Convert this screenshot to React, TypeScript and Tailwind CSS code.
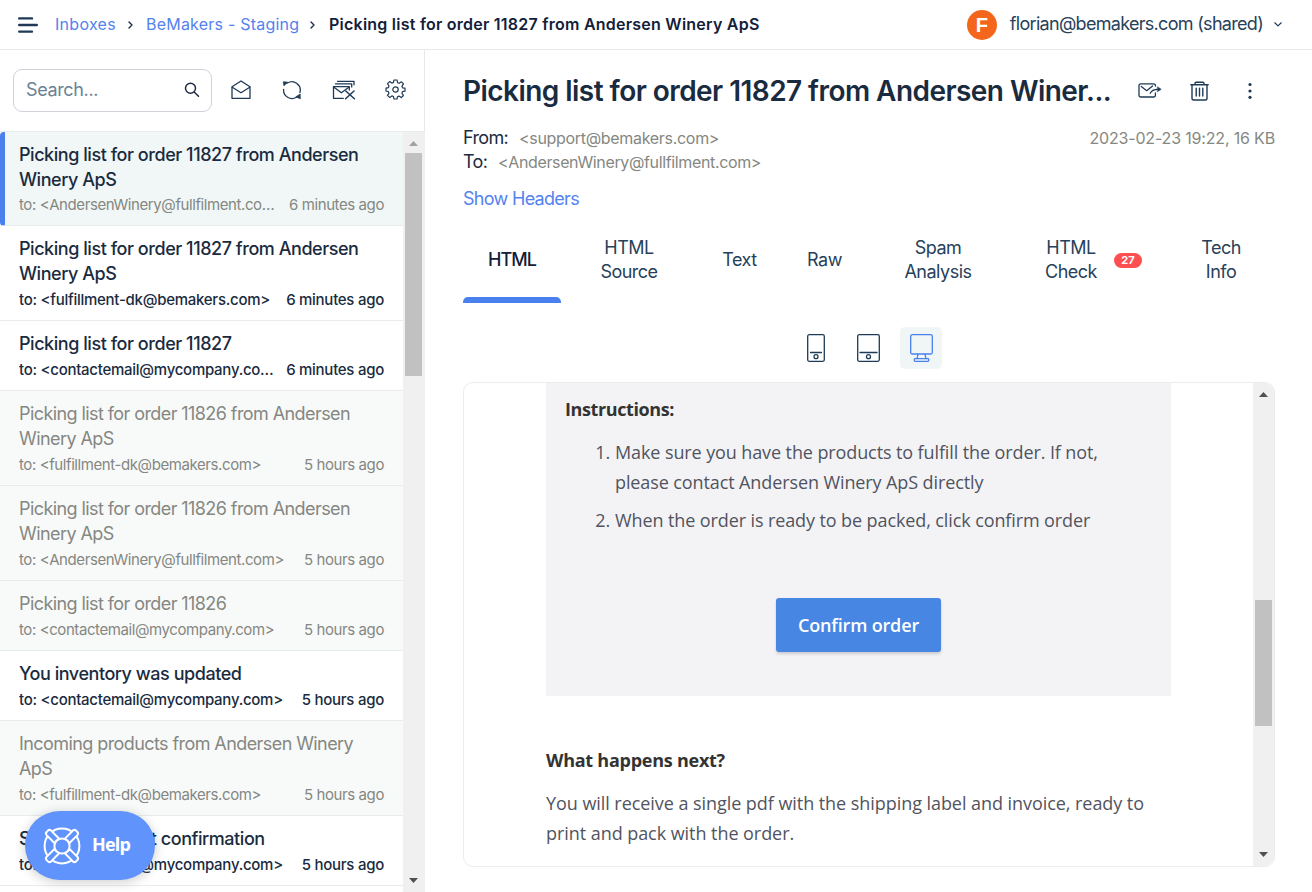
import React from "react";

type Mail = {
  subject: string;
  to: string;
  time: string;
  unread?: boolean;
  active?: boolean;
};

const mails: Mail[] = [
  { subject: "Picking list for order 11827 from Andersen Winery ApS", to: "<AndersenWinery@fullfilment.com>", time: "6 minutes ago", active: true },
  { subject: "Picking list for order 11827 from Andersen Winery ApS", to: "<fulfillment-dk@bemakers.com>", time: "6 minutes ago", unread: true },
  { subject: "Picking list for order 11827", to: "<contactemail@mycompany.com>", time: "6 minutes ago", unread: true },
  { subject: "Picking list for order 11826 from Andersen Winery ApS", to: "<fulfillment-dk@bemakers.com>", time: "5 hours ago" },
  { subject: "Picking list for order 11826 from Andersen Winery ApS", to: "<AndersenWinery@fullfilment.com>", time: "5 hours ago" },
  { subject: "Picking list for order 11826", to: "<contactemail@mycompany.com>", time: "5 hours ago" },
  { subject: "You inventory was updated", to: "<contactemail@mycompany.com>", time: "5 hours ago", unread: true },
  { subject: "Incoming products from Andersen Winery ApS", to: "<fulfillment-dk@bemakers.com>", time: "5 hours ago" },
  { subject: "Supply shipment confirmation", to: "<contactemail@mycompany.com>", time: "5 hours ago", unread: true },
];

const stroke = { fill: "none", stroke: "currentColor", strokeLinecap: "round" as const, strokeLinejoin: "round" as const };

function MenuIcon() {
  return (
    <svg className="ml-[18px] h-4 w-5 text-[#1e3a56]" viewBox="0 0 20 16" {...stroke} strokeWidth="2.4">
      <path d="M1.2 1.4H14M1.2 8H18.800M1.2 14.600H14" />
    </svg>
  );
}

function Chevron() {
  return (
    <svg className="mt-px h-2 w-[5px] text-[#1a2b49]" viewBox="0 0 5 8" {...stroke} strokeWidth="1.4">
      <path d="M1 1l3 3-3 3" />
    </svg>
  );
}

function SearchIcon() {
  return (
    <svg className="h-4 w-4 text-[#1e2b45]" viewBox="0 0 16 16" {...stroke} strokeWidth="1.5">
      <circle cx="6.5" cy="6.3" r="5" />
      <path d="M10.2 10l4.3 4.3" />
    </svg>
  );
}

function OpenMailIcon() {
  return (
    <svg className="h-5 w-5" viewBox="0 0 20 20" {...stroke} strokeWidth="1.3">
      <path d="M1 6.8L10 1l9 5.8V18.3H1z" />
      <path d="M1.3 7.3L10 12.8l8.7-5.5" />
    </svg>
  );
}

function RefreshIcon() {
  return (
    <svg className="h-5 w-5" viewBox="0 0 20 20" {...stroke} strokeWidth="1.3">
      <path d="M5.4 3A8.400 8.400 0 0 1 17.900 12.500" />
      <path d="M1.600 9.500A8.400 8.400 0 0 0 14.400 17.200" />
      <path d="M1.700 1.800L5.800 2.300 2.100 5.500z" fill="currentColor" strokeWidth=".8" />
      <path d="M18 18.600L13.800 16.900 17.900 14.200z" fill="currentColor" strokeWidth=".8" />
    </svg>
  );
}

function ClearInboxIcon() {
  return (
    <svg className="h-5 w-6" viewBox="0 0 24 20" {...stroke} strokeWidth="1.3">
      <path d="M5.500 1.300H22v3.500M3.500 3.900H19.700v3M11.300 18.300H1.500V6.600h15.800v3.500" />
      <path d="M2 7.200l7.300 5.600 7.600-5.600" />
      <path d="M13.800 11l8.600 7.800M22 11l-8.400 7.800" strokeWidth="1.5" />
    </svg>
  );
}

function GearIcon() {
  return (
    <svg className="h-[21px] w-[21px]" viewBox="0 0 21 21" {...stroke} strokeWidth="1.2">
      <circle cx="10.5" cy="10.5" r="2.7" />
      <path d="M9 1h3l.6 2.7 1.5.6 2.3-1.5 2.1 2.1-1.5 2.3.6 1.6L20 9.2v2.9l-2.5.5-.6 1.6 1.5 2.3-2.1 2.1-2.3-1.5-1.5.6L12 20H9l-.6-2.5-1.5-.6-2.3 1.5-2.1-2.1L4 14.2l-.6-1.6L1 12V9.2l2.4-.6.6-1.6-1.5-2.3 2.1-2.1 2.3 1.5 1.5-.6z" />
    </svg>
  );
}

function ForwardIcon() {
  return (
    <svg className="h-[18px] w-6" viewBox="0 0 24 18" {...stroke} strokeWidth="1.3">
      <path d="M17.4 4V3.600A1.800 1.800 0 0 0 15.600 1.800H2.800A1.800 1.800 0 0 0 1 3.600V13.200A1.800 1.800 0 0 0 2.800 15H15.600A1.800 1.800 0 0 0 17.400 13.200V11" />
      <path d="M3.300 4.500l5.400 4.200 5.800-4.700M12.200 11.300c1.300-2.700 3-4 7.500-4" />
      <path d="M19.500 4.800L23.300 7.300l-3.800 2.500z" fill="currentColor" strokeWidth=".4" />
    </svg>
  );
}

function TrashIcon() {
  return (
    <svg className="h-5 w-[19px]" viewBox="0 0 19 20" {...stroke} strokeWidth="1.4">
      <path d="M.8 3.700H18.200M5 3.500V2.400A1.200 1.200 0 0 1 6.200 1.200H12.800A1.200 1.200 0 0 1 14 2.400V3.500M2 3.900V17.200A1.800 1.800 0 0 0 3.800 19H15.200A1.800 1.800 0 0 0 17 17.200V3.900" />
      <path d="M6.200 7.200v7.900M9.500 7.200v7.900M12.800 7.200v7.900" />
    </svg>
  );
}

function DotsIcon() {
  return (
    <svg className="h-[18px] w-1" viewBox="0 0 4 18" fill="currentColor">
      <circle cx="2" cy="2.500" r="1.600" />
      <circle cx="2" cy="9" r="1.600" />
      <circle cx="2" cy="15.300" r="1.600" />
    </svg>
  );
}

function PhoneIcon() {
  return (
    <svg className="h-7 w-[18px]" viewBox="0 0 18 28" {...stroke} strokeWidth="1.3">
      <rect x=".7" y=".7" width="16.600" height="26.600" rx="1.500" />
      <path d="M3.500 18.500h11" />
      <circle cx="9" cy="22.700" r="2" />
    </svg>
  );
}

function TabletIcon() {
  return (
    <svg className="h-7 w-[23px]" viewBox="0 0 23 28" {...stroke} strokeWidth="1.3">
      <rect x=".7" y=".7" width="21.600" height="26.600" rx="1.500" />
      <path d="M3 18.500h17" />
      <circle cx="11.500" cy="22.700" r="2" />
    </svg>
  );
}

function MonitorIcon() {
  return (
    <svg className="h-7 w-[23px]" viewBox="0 0 23 28" {...stroke} strokeWidth="1.3">
      <rect x=".7" y=".7" width="21.600" height="19.300" rx="1.500" />
      <path d="M8 20.200l-1 4.500M15 20.200l1 4.500" />
      <rect x="4.300" y="24.600" width="14.400" height="2.700" rx=".8" />
    </svg>
  );
}

function LifebuoyIcon() {
  return (
    <svg className="h-[38px] w-[38px]" viewBox="0 0 38 38" {...stroke} strokeWidth="2">
      <circle cx="19" cy="19" r="17.400" />
      <circle cx="19" cy="19" r="7.600" />
      {[0, 90, 180, 270].map((angle) => (
        <path
          key={angle}
          transform={`rotate(${angle} 19 19)`}
          fill="#6094fc"
          d="M11.700 16.200L3.600 8.100A2.300 2.300 0 0 1 3.600 5L5 3.600A2.300 2.300 0 0 1 8.100 3.600L16.200 11.700A7.600 7.600 0 0 0 11.700 16.200z"
        />
      ))}
    </svg>
  );
}

function ArrowTri({ down, className }: { down?: boolean; className: string }) {
  return (
    <svg className={className} viewBox="0 0 9 5" fill="currentColor">
      <path d={down ? "M0 0h9L4.500 5z" : "M0 5h9L4.500 0z"} />
    </svg>
  );
}

function MailRow({ mail, first }: { mail: Mail; first: boolean }) {
  const tone = mail.active
    ? "border-l-[5px] border-l-[#4a80ee] bg-[#f0f7f6] pl-[14px] pt-[10px]"
    : mail.unread
      ? "bg-white pl-[19px] pt-[10px]"
      : "bg-[#f8faf9] pl-[19px] pt-[10px]";
  const bold = mail.active || mail.unread;
  return (
    <li className={`flex flex-col border-b border-b-[#e9ecec] pr-[19px] ${tone} ${first ? "h-[94px] rounded-l-[4px]" : "pb-[10px]"}`}>
      <div className={bold ? "text-[18px] font-medium leading-[25px] tracking-[-0.45px] text-[#1a2b40]" : "text-[18px] leading-[25px] tracking-[-0.58px] text-[#858782]"}>
        {mail.subject}
      </div>
      <div
        className={`flex justify-between whitespace-nowrap text-[15px] leading-[21px] ${first ? "mt-[2px]" : "mt-[3px]"} ${
          mail.unread ? "font-medium tracking-[-0.265px] text-[#1a2b40]" : "tracking-[-0.41px] text-[#858782]"
        }`}
      >
        <span className="mr-[12px] min-w-0 truncate">to: {mail.to}</span>
        <span className="shrink-0">{mail.time}</span>
      </div>
    </li>
  );
}

function Header() {
  return (
    <header className="flex h-[50px] shrink-0 items-center border-b border-[#e9e9e9] pr-[30px]">
      <MenuIcon />
      <nav className="-mt-px ml-[17px] flex items-center text-[16px] leading-6">
        <a className="w-[73px] tracking-[0.28px] text-[#5482ee]">Inboxes</a>
        <Chevron />
        <a className="ml-[13px] w-[164px] tracking-[0.22px] text-[#5482ee]">BeMakers - Staging</a>
        <Chevron />
        <span className="ml-[14px] whitespace-nowrap font-semibold tracking-[0.24px] text-[#12203a]">Picking list for order 11827 from Andersen Winery ApS</span>
      </nav>
      <div className="ml-auto flex items-center">
        <div className="flex h-[30px] w-[30px] items-center justify-center rounded-full bg-[#f4661b] font-['Liberation_Sans',sans-serif] text-[20px] font-bold text-white">F</div>
        <span className="-mt-[2px] ml-[13px] text-[18px] leading-6 tracking-[-0.7px] text-[#27415a]">florian@bemakers.com (shared)</span>
        <svg className="ml-[11px] h-[5px] w-2 text-[#1e3a56]" viewBox="0 0 8 5" {...stroke} strokeWidth="1.2">
          <path d="M.8.8L4 3.900 7.200.8" />
        </svg>
      </div>
    </header>
  );
}

function Sidebar() {
  return (
    <aside className="flex w-[425px] shrink-0 flex-col border-r border-[#e9e9e9]">
      <div className="flex h-[81px] shrink-0 items-center pb-px pl-[13px] text-[#1e3a56]">
        <div className="flex h-[43px] w-[199px] items-center justify-between rounded-[9px] border border-[#cfd2d8] pl-[12px] pr-[11px]">
          <span className="-mt-[2px] text-[18px] tracking-[-0.36px] text-[#6a8294]">Search...</span>
          <SearchIcon />
        </div>
        <div className="-mt-px ml-[19px] flex items-center">
          <OpenMailIcon />
          <span className="ml-[31px]"><RefreshIcon /></span>
          <span className="ml-[30px]"><ClearInboxIcon /></span>
          <span className="ml-[29px]"><GearIcon /></span>
        </div>
      </div>
      <div className="flex min-h-0 flex-1 border-t border-[#e9ecec]">
        <ul className="w-[403px] shrink-0 overflow-hidden">
          {mails.map((mail, i) => (
            <MailRow key={i} mail={mail} first={i === 0} />
          ))}
        </ul>
        <div className="-mr-px flex w-[22px] shrink-0 flex-col bg-[#f0f0f0] pl-[2px]">
          <ArrowTri className="mb-[7px] ml-[4px] mt-[9px] h-[5px] w-[9px] shrink-0 text-[#a3a3a3]" />
          <div className="h-[223px] w-[17px] shrink-0 bg-[#c1c1c1]" />
          <ArrowTri down className="mb-[9px] ml-[4px] mt-auto h-[5px] w-[9px] shrink-0 text-[#505050]" />
        </div>
      </div>
    </aside>
  );
}

const tabs = [
  { label: "HTML", width: "w-[98px]", active: true },
  { label: "HTML Source", width: "w-[136px] px-[38px]" },
  { label: "Text", width: "w-[85px]" },
  { label: "Raw", width: "w-[85px]" },
  { label: "Spam Analysis", width: "w-[142px] px-[34px]" },
  { label: "HTML Check", width: "w-[158px]", badge: "27" },
  { label: "Tech Info", width: "w-[108px] px-[32px]" },
];

function Tabs() {
  return (
    <div className="mt-[24px] flex h-[68px] text-[18px] leading-6 tracking-[-0.5px] text-[#27415a]">
      {tabs.map((tab) => (
        <div
          key={tab.label}
          className={`flex shrink-0 flex-col items-center text-center ${tab.width} ${tab.active ? "font-medium tracking-[-0.94px] text-[#12203a]" : ""}`}
        >
          <div className="flex h-12 items-center">
            {tab.badge ? (
              <div className="flex items-center pl-[11px]">
                <span className="w-[52px]">{tab.label}</span>
                <span className="ml-[17px] flex h-[15px] w-[28px] items-center justify-center rounded-full bg-[#fb4f51] text-[11px] font-bold leading-none tracking-normal text-white">{tab.badge}</span>
              </div>
            ) : (
              tab.label
            )}
          </div>
          {tab.active && <div className="mt-[13px] h-[6px] w-full shrink-0 rounded-t-[5px] bg-[#4a80ee]" />}
        </div>
      ))}
    </div>
  );
}

function Preview() {
  return (
    <div className="mt-[13px] flex h-[485px] w-[812px] shrink-0 overflow-hidden rounded-[10px] border border-[#ececec] font-['Open_Sans','Noto_Sans',sans-serif] text-[18px] leading-[30px] text-[#51545e]">
      <div className="min-w-0 flex-1 pl-[82px]">
        <div className="h-[313px] w-[625px] bg-[#f3f3f6] pl-[19px] pt-[11px]">
          <h2 className="font-bold tracking-[-0.4px] text-[#333333]">Instructions:</h2>
          <ol className="mt-[13px] flex flex-col gap-[8px] tracking-[-0.105px]">
            {["Make sure you have the products to fulfill the order. If not, please contact Andersen Winery ApS directly", "When the order is ready to be packed, click confirm order"].map((step, i) => (
              <li key={step} className="flex">
                <span className="w-[45px] shrink-0 text-right">{i + 1}.</span>
                <span className="ml-[5px] w-[500px]">{step}</span>
              </li>
            ))}
          </ol>
          <div className="ml-[211px] mt-[63px] flex h-[54px] w-[165px] items-center justify-center rounded-[3px] bg-[#4886e4] font-semibold tracking-[-0.16px] text-white shadow-[0_2px_3px_rgba(0,0,0,0.16)]">
            Confirm order
          </div>
        </div>
        <h2 className="mt-[49px] font-bold tracking-[-0.25px] text-[#333333]">What happens next?</h2>
        <p className="mt-[13px] w-[625px] tracking-[-0.056px]">
          You will receive a single pdf with the shipping label and invoice, ready to print and pack with the order.
        </p>
      </div>
      <div className="flex w-[21px] shrink-0 flex-col items-center bg-[#f0f0f0]">
        <ArrowTri className="mt-[9px] h-[5px] w-[9px] shrink-0 text-[#505050]" />
        <div className="mt-[203px] h-[126px] w-[17px] shrink-0 bg-[#c1c1c1]" />
        <ArrowTri down className="mb-[9px] mt-auto h-[5px] w-[9px] shrink-0 text-[#505050]" />
      </div>
    </div>
  );
}

function Message() {
  return (
    <main className="flex min-w-0 flex-1 flex-col pl-[38px] pr-[37px]">
      <div className="mt-[23px] flex h-[36px] items-center text-[#1e3a56]">
        <h1 className="w-[660px] whitespace-nowrap text-[28px] font-semibold leading-9 tracking-[-0.55px] text-[#1a2b40]">Picking list for order 11827 from Andersen Winer...</h1>
        <span className="ml-[15px]"><ForwardIcon /></span>
        <span className="ml-[28px]"><TrashIcon /></span>
        <span className="ml-[39px]"><DotsIcon /></span>
      </div>
      <div className="mt-[17px] flex justify-between text-[16px] leading-6 text-[#858782]">
        <div className="tracking-[-0.36px]">
          <div className="flex">
            <span className="w-[56px] text-[18px] tracking-[-0.66px] text-[#1a2b40]">From:</span>
            <span className="tracking-[-0.31px]">&lt;support@bemakers.com&gt;</span>
          </div>
          <div className="flex">
            <span className="w-[35px] text-[18px] tracking-[-0.66px] text-[#1a2b40]">To:</span>
            <span>&lt;AndersenWinery@fullfilment.com&gt;</span>
          </div>
        </div>
        <span className="tracking-[-0.17px]">2023-02-23 19:22, 16 KB</span>
      </div>
      <a className="mt-[12px] text-[18px] leading-[26px] tracking-[-0.7px] text-[#5482ee]">Show Headers</a>
      <Tabs />
      <div className="mt-[23px] flex items-center justify-center pr-[7px] text-[#1e3a56]">
        <div className="flex h-[42px] w-[53px] items-center justify-center"><PhoneIcon /></div>
        <div className="flex h-[42px] w-[53px] items-center justify-center"><TabletIcon /></div>
        <div className="ml-[5px] flex h-[42px] w-[42px] items-center justify-center rounded-[5px] bg-[#f0f6f6] text-[#4a80ee]"><MonitorIcon /></div>
      </div>
      <Preview />
    </main>
  );
}

export default function App() {
  return (
    <div className="flex h-[892px] w-[1312px] flex-col overflow-hidden bg-white font-['Inter',sans-serif]">
      <Header />
      <div className="flex min-h-0 flex-1">
        <Sidebar />
        <Message />
      </div>
      <button className="absolute left-[25px] top-[811px] flex h-[69px] w-[130px] items-center rounded-full bg-[#6094fc] pl-[18px] text-white shadow-[0_2px_12px_rgba(0,0,0,0.2)]">
        <LifebuoyIcon />
        <span className="-mt-[2px] ml-[11px] font-['Open_Sans',sans-serif] text-[18px] font-bold tracking-[-0.8px]">Help</span>
      </button>
    </div>
  );
}
